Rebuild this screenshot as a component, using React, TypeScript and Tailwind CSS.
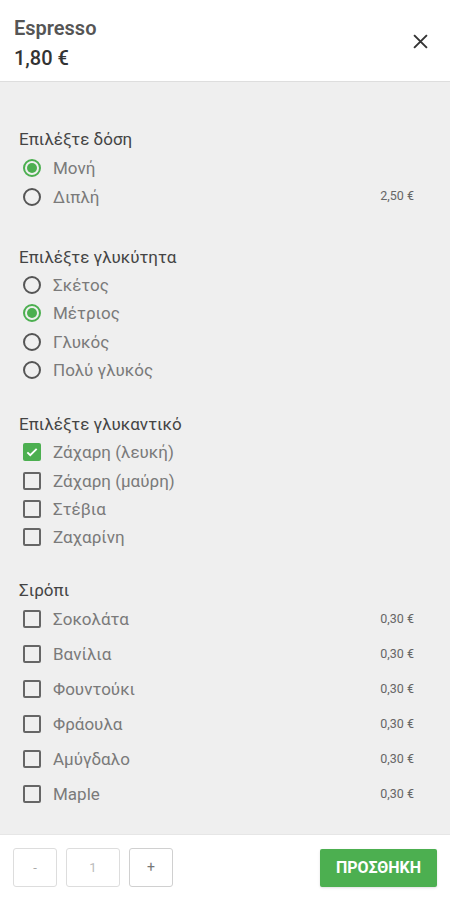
import { useState } from 'react';

type Opt = { label: string; price?: string };

const font = { fontFamily: 'Roboto, "Noto Sans", sans-serif' };

function Radio({ checked }: { checked: boolean }) {
  return (
    <span
      className={`w-[18px] h-[18px] rounded-full border-2 flex items-center justify-center shrink-0 ${
        checked ? 'border-[#4caf50]' : 'border-[#555]'
      }`}
    >
      {checked && <span className="w-[10px] h-[10px] rounded-full bg-[#4caf50]" />}
    </span>
  );
}

function Check({ checked }: { checked: boolean }) {
  if (checked) {
    return (
      <span className="w-[18px] h-[18px] rounded-[2px] bg-[#4caf50] flex items-center justify-center shrink-0">
        <svg width="14" height="14" viewBox="0 0 24 24" fill="none" stroke="white" strokeWidth="3.2">
          <path d="M4 12.5l5 5L20 6.5" />
        </svg>
      </span>
    );
  }
  return <span className="w-[18px] h-[18px] rounded-[2px] border-2 border-[#666] shrink-0" />;
}

function Row({ control, label, price, h }: { control: React.ReactNode; label: string; price?: string; h: string }) {
  return (
    <div className={`flex items-center ${h} pl-[4px]`}>
      {control}
      <span className="ml-[12px] text-[17px] leading-[20px] text-[#7a7a7a] flex-1">{label}</span>
      {price && <span className="text-[12.5px] text-[#666] pr-[17px]">{price}</span>}
    </div>
  );
}

function Section({
  title,
  options,
  type,
  selected,
  rowH,
  className,
}: {
  title: string;
  options: Opt[];
  type: 'radio' | 'check';
  selected: number[];
  rowH: string;
  className?: string;
}) {
  return (
    <div className={className}>
      <p className="h-[22px] leading-[22px] text-[17px] text-[#444]">{title}</p>
      <div className="mt-[3px]">
        {options.map((o, i) => (
          <Row
            key={o.label}
            h={rowH}
            label={o.label}
            price={o.price}
            control={type === 'radio' ? <Radio checked={selected.includes(i)} /> : <Check checked={selected.includes(i)} />}
          />
        ))}
      </div>
    </div>
  );
}

export default function App() {
  const [qty] = useState(1);
  return (
    <div className="w-[450px] h-[900px] flex flex-col bg-white" style={font}>
      <header className="h-[82px] shrink-0 border-b border-[#dedede] px-[14px] pt-[16px] flex justify-between">
        <div>
          <p className="text-[20px] leading-[24px] font-semibold text-[#555]">Espresso</p>
          <p className="mt-[6px] text-[20px] leading-[24px] font-medium text-[#333]">1,80 €</p>
        </div>
        <button className="mt-[17px] mr-[8px] w-[16px] h-[16px] flex items-center justify-center text-[#333]" aria-label="Close">
          <svg width="15" height="15" viewBox="0 0 14 14" fill="none" stroke="currentColor" strokeWidth="1.8">
            <path d="M1 1l12 12M13 1L1 13" />
          </svg>
        </button>
      </header>

      <main className="flex-1 bg-[#efefef] px-[19px] pt-[46px]">
        <Section
          title="Επιλέξτε δόση"
          type="radio"
          rowH="h-[29px]"
          selected={[0]}
          options={[{ label: 'Μονή' }, { label: 'Διπλή', price: '2,50 €' }]}
        />
        <Section
          className="mt-[35px]"
          title="Επιλέξτε γλυκύτητα"
          type="radio"
          rowH="h-[28.3px]"
          selected={[1]}
          options={[{ label: 'Σκέτος' }, { label: 'Μέτριος' }, { label: 'Γλυκός' }, { label: 'Πολύ γλυκός' }]}
        />
        <Section
          className="mt-[29px]"
          title="Επιλέξτε γλυκαντικό"
          type="check"
          rowH="h-[28.3px]"
          selected={[0]}
          options={[
            { label: 'Ζάχαρη (λευκή)' },
            { label: 'Ζάχαρη (μαύρη)' },
            { label: 'Στέβια' },
            { label: 'Ζαχαρίνη' },
          ]}
        />
        <div className="mt-[29px]">
          <p className="h-[21px] leading-[21px] text-[17px] text-[#444]">Σιρόπι</p>
          <div>
            {['Σοκολάτα', 'Βανίλια', 'Φουντούκι', 'Φράουλα', 'Αμύγδαλο', 'Maple'].map((l) => (
              <Row key={l} h="h-[35px]" label={l} price="0,30 €" control={<Check checked={false} />} />
            ))}
          </div>
        </div>
      </main>

      <footer className="h-[66px] shrink-0 bg-white border-t border-[#e6e6e6] px-[13px] flex items-center justify-between">
        <div className="flex gap-[9px]">
          <button className="w-[44px] h-[39px] rounded-[3px] border border-[#ddd] text-[13px] text-[#aaa]">-</button>
          <div className="w-[54px] h-[39px] rounded-[3px] border border-[#ddd] text-[13px] text-[#bbb] flex items-center justify-center">
            {qty}
          </div>
          <button className="w-[44px] h-[39px] rounded-[3px] border border-[#d0d0d0] text-[14px] text-[#777]">+</button>
        </div>
        <button className="w-[117px] h-[38px] rounded-[2px] bg-[#4caf50] text-white text-[16px] font-bold shadow-sm">
          ΠΡΟΣΘΗΚΗ
        </button>
      </footer>
    </div>
  );
}
